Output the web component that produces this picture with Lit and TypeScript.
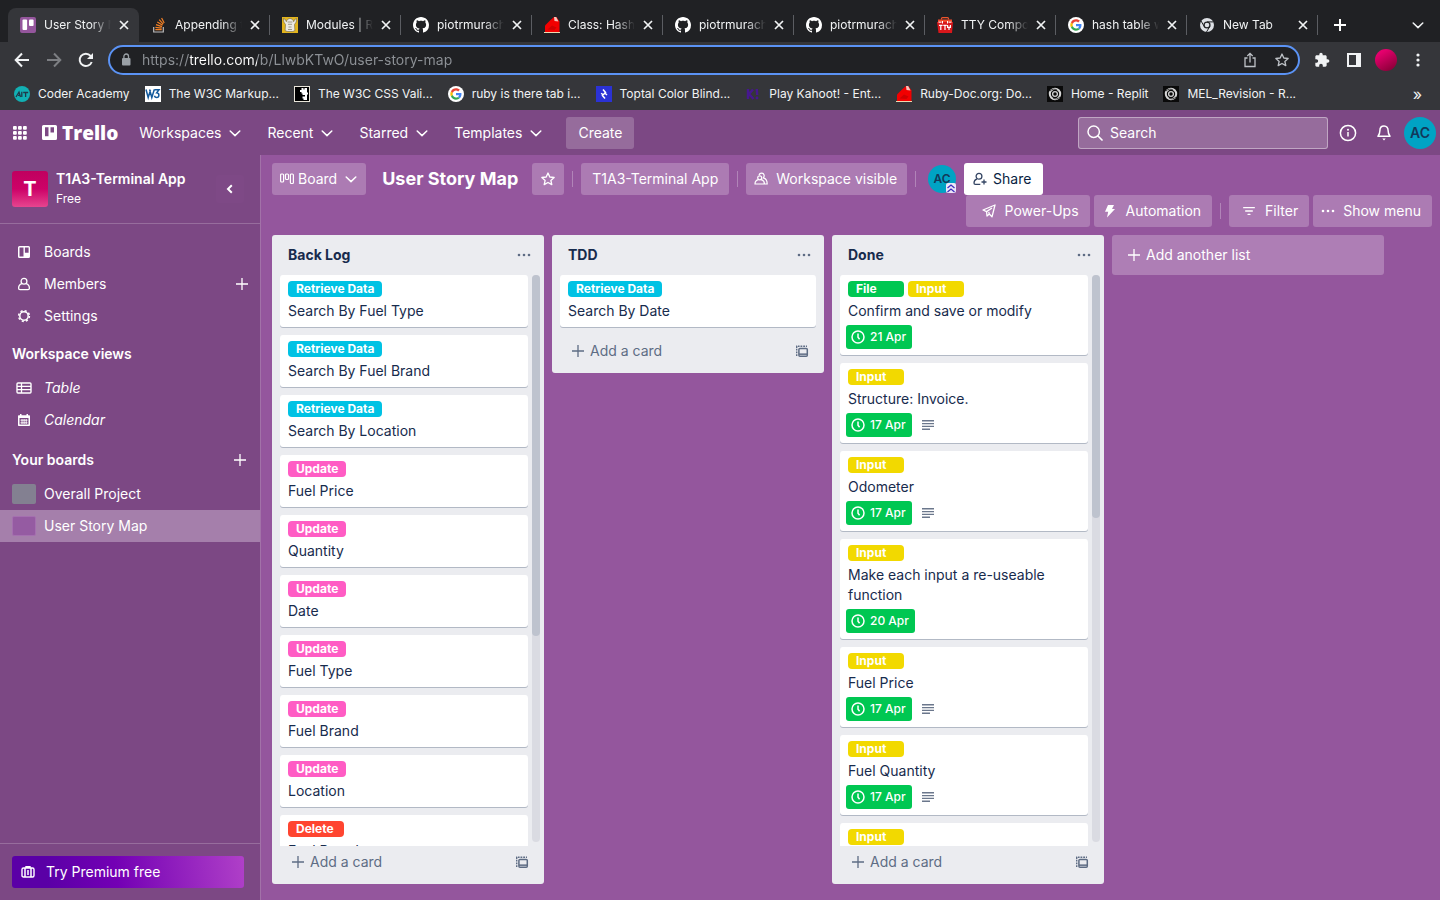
import { LitElement, html, svg, css, nothing } from "lit";
import { customElement, property } from "lit/decorators.js";
import { classMap } from "lit/directives/class-map.js";
import { styleMap } from "lit/directives/style-map.js";

const icon = (size: number, box: string, body: unknown, h = size) => html`<svg
  width=${size} height=${h} viewBox=${box} fill="none" aria-hidden="true">${body}</svg>`;

const GITHUB =
  "M8 0C3.58 0 0 3.58 0 8c0 3.54 2.29 6.53 5.47 7.59.4.07.55-.17.55-.38 0-.19-.01-.82-.01-1.49-2.01.37-2.53-.49-2.69-.94-.09-.23-.48-.94-.82-1.13-.28-.15-.68-.52-.01-.53.63-.01 1.08.58 1.23.82.72 1.21 1.87.87 2.33.66.07-.52.28-.87.51-1.07-1.78-.2-3.64-.89-3.64-3.95 0-.87.31-1.59.82-2.15-.08-.2-.36-1.02.08-2.12 0 0 .67-.21 2.2.82.64-.18 1.32-.27 2-.27.68 0 1.36.09 2 .27 1.53-1.04 2.2-.82 2.2-.82.44 1.1.16 1.92.08 2.12.51.56.82 1.27.82 2.15 0 3.07-1.87 3.75-3.65 3.95.29.25.54.73.54 1.48 0 1.07-.01 1.93-.01 2.2 0 .21.15.46.55.38A8.013 8.013 0 0016 8c0-4.42-3.58-8-8-8z";

const favicons: Record<string, () => unknown> = {
  trello: () => icon(16, "0 0 16 16", svg`<rect width="16" height="16" rx="2" fill="#94569c"/>
    <rect x="2.5" y="2.5" width="4.6" height="10.5" rx="1" fill="#fff"/><rect x="9" y="2.5" width="4.6" height="6.5" rx="1" fill="#fff"/>`),
  stack: () => icon(16, "0 0 16 16", svg`<path d="M2.7 10v5h9.6v-5" stroke="#bcbbbb" stroke-width="1.2"/>
    <path d="M4.3 12.7h6.4M4.4 10.3l6.3.9M5 7.6l6 2M6.3 4.9l5.3 3.4M8.2 2.6l4 4.6M10.6.9l2.6 5.2" stroke="#f48024" stroke-width="1.2"/>`),
  modules: () => icon(16, "0 0 16 16", svg`<rect width="16" height="16" fill="#e3b51e"/>
    <path d="M1.5 1.5l2 1.200.8 2C5 2.500 6.500 1.500 8 1.500s3 1 3.700 3.200l.8-2 2-1.200-.3 3.500-1.700 2.500.4 6-2 1H5.100l-2-1 .4-6-1.700-2.500z" fill="#ece9e2" stroke="#6f6548" stroke-width=".6"/>
    <path d="M5.600 5h4.800M6 7.300h4M6.500 10h3M6 12.500h4" stroke="#8b8473" stroke-width=".8"/>`),
  github: () => icon(16, "0 0 16 16", svg`<path fill="#fff" d=${GITHUB}/>`),
  ruby: () => icon(16, "0 0 16 16", svg`<path d="M1 15V8.500L6.500 3 10 0h2.500L15.500 4.500V15z" fill="#f20000"/>
    <path d="M3.500 12.500l4.500-4 4.500 2-2 2.500z" fill="#d00000"/><path d="M10 0h2.200L14.500 4.500l-4-.6z" fill="#f4c4bd"/><path d="M0 15h16v1H0z" fill="#efd9b0"/>`),
  tty: () => icon(16, "0 0 16 16", svg`<path d="M4.500 2.500V1.600C4.500.900 5 .6 5.500.6h5c.6 0 1 .4 1 1v.900" stroke="#f0552c" stroke-width="1.2"/>
    <path d="M1 2.500h14v3.200H1z" fill="#f04a2a"/><path d="M0 5h16l-1 11H1.500z" fill="#d8171b"/>
    <path d="M1.500 5.200h3m7 0h3M5.500 4v2.500M10.500 4v2.500" stroke="#fff" stroke-width="1"/>
    <path d="M2 8.300h3.600M3.800 8.300V13M6.300 8.300h3.500M8 8.300V13M10.600 8v2.300h2.800V8M12 10.300V13" stroke="#fff" stroke-width="1.200"/>`),
  google: () => icon(16, "0 0 16 16", svg`<circle cx="8" cy="8" r="8" fill="#fff"/>
    <g transform="translate(2.300 2.300) scale(.2375)">
    <path fill="#ea4335" d="M24 9.500c3.540 0 6.710 1.220 9.210 3.600l6.850-6.850C35.900 2.380 30.470 0 24 0 14.620 0 6.510 5.380 2.560 13.220l7.980 6.190C12.430 13.720 17.740 9.500 24 9.500z"/>
    <path fill="#4285f4" d="M46.980 24.550c0-1.570-.15-3.090-.38-4.550H24v9.020h12.940c-.58 2.960-2.260 5.480-4.780 7.180l7.730 6c4.510-4.180 7.090-10.360 7.090-17.650z"/>
    <path fill="#fbbc05" d="M10.530 28.590c-.48-1.450-.76-2.990-.76-4.590s.27-3.140.76-4.590l-7.980-6.190C.92 16.460 0 20.120 0 24c0 3.880.92 7.540 2.560 10.780l7.970-6.190z"/>
    <path fill="#34a853" d="M24 48c6.480 0 11.930-2.130 15.890-5.810l-7.730-6c-2.150 1.450-4.920 2.300-8.160 2.300-6.260 0-11.570-4.220-13.470-9.910l-7.980 6.190C6.510 42.620 14.620 48 24 48z"/></g>`),
  chrome: () => icon(16, "0 0 16 16", svg`<circle cx="8" cy="8" r="7" fill="#dee1e6"/>
    <circle cx="8" cy="8" r="3.600" fill="#202124"/><circle cx="8" cy="8" r="2.300" fill="#dee1e6"/>
    <path d="M8 4.900h6.600M5.300 9.600L2 3.900M10.700 9.600L7.500 15" stroke="#202124" stroke-width="1"/>`),
  coder: () => icon(16, "0 0 16 16", svg`<circle cx="8" cy="8" r="8" fill="#12b0b3"/>
    <path d="M2 11l3-5 1.500 5M4 9.300h2M7.800 5.800V11M9.200 6.500h5M11.600 6.500V11" stroke="#1f3a4a" stroke-width="1.300"/>`),
  w3: () => icon(16, "0 0 16 16", svg`<rect width="16" height="16" fill="#fff"/>
    <path d="M1 3.500l2.200 8L5.500 4M4.600 3.500l2.200 8 2.500-8M9.500 3.800H14l-2.300 3c3 .2 2.800 4.700 0 4.700-1.200 0-2-.7-2.300-1.700" stroke="#12599c" stroke-width="1.500"/>`),
  w3css: () => icon(16, "0 0 16 16", svg`<rect x=".5" y=".5" width="15" height="15" fill="#000" stroke="#e9e5da"/>
    <path d="M7.500 2h2v1.500h1V2h2.500v4.500h1v2h-1V14H9.500v-1.500H8.500v-2H11V9H8.500V7.500h-1V6H6V4h1.500z" fill="#fff"/>`),
  toptal: () => icon(16, "0 0 16 16", svg`<rect width="16" height="16" fill="#2b32d5"/>
    <path d="M7 3.500l2.500 3-3 3 2.500 3M5.200 7.200l1.800 1.600M11 9L9 7.200" stroke="#fff" stroke-width="1.500"/>`),
  kahoot: () => icon(16, "0 0 16 16", svg`<path d="M3 3v10M8 3.500L4 8l4.500 5M11.800 3l.4 6" stroke="#46178f" stroke-width="2.400"/><circle cx="12" cy="12" r="1.400" fill="#46178f"/>`),
  replit: () => icon(16, "0 0 16 16", svg`<rect width="16" height="16" fill="#0a0a0a"/>
    <circle cx="8" cy="8" r="5.200" stroke="#d6d6d6" stroke-width="2"/><circle cx="8" cy="8" r="2.400" stroke="#cfcfcf" stroke-width="1.300"/>
    <path d="M3 5c2-2 4.500-2.500 7-1M13 11c-2 2-4.500 2.500-7 1" stroke="#0a0a0a" stroke-width=".7"/>`),
};

const plus = (s = 12) => icon(s, "0 0 12 12", svg`<path d="M6 0v12M0 6h12" stroke="currentColor" stroke-width="1.300"/>`);
const cross = () => icon(10, "0 0 10 10", svg`<path d="M1 1l8 8M9 1l-8 8" stroke="#f1f3f4" stroke-width="1.700"/>`);
const chevron = () => icon(12, "0 0 12 12", svg`<path d="M1.200 4L6 8.600 10.800 4" stroke="currentColor" stroke-width="1.500" stroke-linecap="round" stroke-linejoin="round"/>`);
const dots = () => icon(14, "0 0 14 4", svg`<g fill="currentColor"><circle cx="2" cy="2" r="1.300"/><circle cx="7" cy="2" r="1.300"/><circle cx="12" cy="2" r="1.300"/></g>`, 4);
const boardsIcon = () => icon(14, "0 0 14 14", svg`<path fill="currentColor" fill-rule="evenodd" d="M2.500 1h9A1.500 1.500 0 0113 2.500v9a1.500 1.500 0 01-1.500 1.500h-9A1.500 1.500 0 011 11.500v-9A1.500 1.500 0 012.500 1zm0 1.400v9.200h4V2.400zm5.400 0v5.400h3.700V2.400z"/>`);
const personIcon = () => icon(14, "0 0 14 14", svg`<g stroke="currentColor" stroke-width="1.300"><circle cx="7" cy="4.200" r="2.900"/><path d="M4.800 6.700C2.800 7.400 1.600 9 1.600 11.200c0 .900.500 1.400 1.400 1.400h8c.900 0 1.400-.5 1.400-1.400 0-2.200-1.200-3.800-3.200-4.500"/></g>`);
const gearIcon = () => icon(14, "0 0 14 14", svg`<circle cx="7" cy="7" r="4.200" stroke="currentColor" stroke-width="1.500"/><circle cx="7" cy="7" r="5.400" stroke="currentColor" stroke-width="1.500" stroke-dasharray="2.120 2.120"/>`);
const tableIcon = () => icon(16, "0 0 16 12", svg`<rect x="1" y="1" width="14" height="10" rx="1" stroke="currentColor" stroke-width="1.400"/><path d="M1 4.300h14M1 7.600h14M5.500 1v10" stroke="currentColor" stroke-width="1.300"/>`, 12);
const calendarIcon = () => icon(14, "0 0 14 14", svg`<path fill="currentColor" fill-rule="evenodd" d="M3 1h1.500v1.200h5V1H11v1.200h1c.600 0 1 .4 1 1V12c0 .6-.4 1-1 1H2c-.6 0-1-.4-1-1V3.200c0-.6.4-1 1-1h1zM2.500 5v6.500h9V5z"/><path d="M3.500 7.200h7M3.500 9.800h7M5 6v5M7.100 6v5M9.200 6v5" stroke="currentColor" stroke-width=".9"/>`);
const clockIcon = () => icon(14, "0 0 14 14", svg`<circle cx="7" cy="7" r="6" stroke="currentColor" stroke-width="1.500"/><path d="M7 3.400v3.800l1.600 2" stroke="currentColor" stroke-width="1.500"/>`);
const linesIcon = () => icon(12, "0 0 12 10", svg`<path d="M0 .8h12M0 3.600h12M0 6.400h12M0 9.200h8" stroke="#6b778c" stroke-width="1.400"/>`, 10);
const templateIcon = () => icon(14, "0 0 14 14", svg`<path d="M1.700 12V2.300H12" stroke="currentColor" stroke-width="1.400" stroke-dasharray="1.800 .9"/><rect x="3.900" y="4.600" width="8.400" height="7.600" rx="1" stroke="currentColor" stroke-width="1.500"/><path d="M4 9.400h8.300v1.500H4z" fill="currentColor"/>`);
const starIcon = (s: number) => icon(s, "0 0 24 24", svg`<path d="M12 3l2.700 6 6.500.7-4.900 4.400 1.400 6.400L12 17.200l-5.700 3.300 1.400-6.400L2.800 9.700l6.500-.7z" stroke="currentColor" stroke-width="2" stroke-linejoin="round"/>`);

interface Tab { fav: string; title: string }
const TABS: Tab[] = [
  { fav: "trello", title: "User Story Map" },
  { fav: "stack", title: "Appending to hash" },
  { fav: "modules", title: "Modules | Ruby" },
  { fav: "github", title: "piotrmurach/tty" },
  { fav: "ruby", title: "Class: Hash (Ruby)" },
  { fav: "github", title: "piotrmurach/tty" },
  { fav: "github", title: "piotrmurach/tty" },
  { fav: "tty", title: "TTY Components" },
  { fav: "google", title: "hash table with" },
  { fav: "chrome", title: "New Tab" },
];

const BOOKMARKS: [string, string][] = [
  ["coder", "Coder Academy"],
  ["w3", "The W3C Markup..."],
  ["w3css", "The W3C CSS Vali..."],
  ["google", "ruby is there tab i..."],
  ["toptal", "Toptal Color Blind..."],
  ["kahoot", "Play Kahoot! - Ent..."],
  ["ruby", "Ruby-Doc.org: Do..."],
  ["replit", "Home - Replit"],
  ["replit", "MEL_Revision - R..."],
];

interface Card { labels: string[]; title: string; due?: string; notes?: boolean }
interface List { name: string; cards: Card[]; thumb?: number }

const LABEL_KIND: Record<string, string> = {
  "Retrieve Data": "sky", Update: "pink", Delete: "red", File: "green", Input: "yellow",
};

const card = (label: string, title: string, due?: string, notes = false): Card => ({ labels: [label], title, due, notes });

const LISTS: List[] = [
  {
    name: "Back Log",
    thumb: 63.6,
    cards: [
      card("Retrieve Data", "Search By Fuel Type"),
      card("Retrieve Data", "Search By Fuel Brand"),
      card("Retrieve Data", "Search By Location"),
      card("Update", "Fuel Price"),
      card("Update", "Quantity"),
      card("Update", "Date"),
      card("Update", "Fuel Type"),
      card("Update", "Fuel Brand"),
      card("Update", "Location"),
      card("Delete", "Fuel Brand"),
    ],
  },
  { name: "TDD", cards: [card("Retrieve Data", "Search By Date")] },
  {
    name: "Done",
    thumb: 42.8,
    cards: [
      { labels: ["File", "Input"], title: "Confirm and save or modify", due: "21 Apr" },
      card("Input", "Structure: Invoice.", "17 Apr", true),
      card("Input", "Odometer", "17 Apr", true),
      card("Input", "Make each input a re-useable function", "20 Apr"),
      card("Input", "Fuel Price", "17 Apr", true),
      card("Input", "Fuel Quantity", "17 Apr", true),
      card("Input", "Date", "17 Apr", true),
    ],
  },
];

const base = css`
  * { box-sizing: border-box; }
  button, input { font: inherit; color: inherit; border: 0; background: none; padding: 0; margin: 0; }
  a { color: inherit; text-decoration: none; }
  h1, h2, h3, p, ul { margin: 0; padding: 0; font-size: inherit; }
  ul { list-style: none; }
  svg { display: block; flex: none; }
  button { display: flex; align-items: center; flex: none; }
`;

@customElement("browser-bar")
export class BrowserBar extends LitElement {
  static styles = [base, css`
    :host { display: block; background: #35363a; color: #f1f3f4; font-size: 12px; line-height: 16px; }
    .tabs { display: flex; background: #202124; height: 42px; padding: 8px 16px 0 8px; align-items: stretch; }
    .tab { flex: 0 1 131px; min-width: 0; display: flex; align-items: center; padding: 0 10px 0 12px; position: relative; }
    .tab.active { background: #35363a; border-radius: 8px 8px 0 0; }
    .tab:not(.active)::after { content: ""; position: absolute; right: 0; top: 7px; width: 1px; height: 20px; background: #5b5d62; }
    .tab-title { flex: 1; min-width: 0; margin: 0 8px 0 8px; overflow: hidden; white-space: nowrap;
      mask-image: linear-gradient(90deg, #000 calc(100% - 20px), transparent); }
    .new { margin-left: 16px; }
    .search-tabs { margin-left: auto; }
    .toolbar { display: flex; align-items: center; height: 36px; padding: 0 10px; gap: 8px; }
    .tool { width: 24px; height: 24px; justify-content: center; }
    .omni { flex: 1; display: flex; align-items: center; height: 30px; margin: 0 2px; padding: 0 4px 0 10px; gap: 8px;
      border: 2px solid #5b93f5; border-radius: 15px; background: #202124; color: #bdc1c6; }
    .url-row { flex: 1; display: flex; align-items: center; gap: 10px; }
    .url { flex: 1; min-width: 0; font-size: 14px; line-height: 20px; color: #9aa0a6; outline: 0;
      -webkit-text-fill-color: transparent; background: linear-gradient(90deg, #8d9196 48px, #fff 48px, #fff 115px, #8d9196 115px);
      -webkit-background-clip: text; background-clip: text; }
    .face { width: 22px; height: 22px; border-radius: 50%; background: linear-gradient(150deg, #e5006d 20%, #7d0030); }
    .marks { display: flex; align-items: center; height: 32px; padding: 0 18px 0 14px; gap: 15px; white-space: nowrap; }
    .mark { display: flex; align-items: center; gap: 8px; }
    .more { margin-left: auto; font-size: 16px; }
  `];

  render() {
    return html`
      <div class="tabs" role="tablist">
        ${TABS.map((t, i) => html`<div class=${classMap({ tab: true, active: i === 0 })} role="tab">
          ${favicons[t.fav]()}<span class="tab-title">${t.title}</span><button aria-label="Close tab">${cross()}</button>
        </div>`)}
        <button class="new" aria-label="New tab">${icon(12, "0 0 12 12", svg`<path d="M6 0v12M0 6h12" stroke="#fff" stroke-width="2"/>`)}</button>
        <button class="search-tabs" aria-label="Search tabs">${chevron()}</button>
      </div>
      <div class="toolbar">
        <button class="tool" aria-label="Back">${icon(16, "0 0 16 16", svg`<path d="M15 8H2M8 1.500L1.700 8 8 14.500" stroke="#f1f3f4" stroke-width="2"/>`)}</button>
        <button class="tool" aria-label="Forward">${icon(16, "0 0 16 16", svg`<path d="M1 8h13M8 1.500L14.300 8 8 14.500" stroke="#7d7f83" stroke-width="2"/>`)}</button>
        <button class="tool" aria-label="Reload">${icon(16, "0 0 16 16", svg`<path d="M13.700 10A6.200 6.200 0 1112.600 3.800L14 5.300" stroke="#f1f3f4" stroke-width="2"/><path d="M15 1v6H9z" fill="#f1f3f4"/>`)}</button>
        <div class="omni">
          <div class="url-row">
            ${icon(12, "0 0 12 14", svg`<rect x="2" y="5" width="8.500" height="7.500" rx="1" fill="#9aa0a6"/><path d="M3.900 5.500V3.300a2.300 2.300 0 014.600 0v2.200" stroke="#9aa0a6" stroke-width="1.300"/>`, 14)}
            <input class="url" aria-label="Address" value="https://trello.com/b/LlwbKTwO/user-story-map" />
          </div>
          <button class="tool" aria-label="Share page">${icon(12, "0 0 12 16", svg`<path d="M3.500 6H1v8.500h10V6H8.500M6 10.500V1.500M3.300 4L6 1.400 8.700 4" stroke="currentColor" stroke-width="1.300"/>`, 16)}</button>
          <button class="tool" aria-label="Bookmark">${starIcon(16)}</button>
        </div>
        <button class="tool" aria-label="Extensions">${icon(16, "0 0 24 24", svg`<path fill="#f1f3f4" d="M20.500 11H19V7c0-1.100-.9-2-2-2h-4V3.500C13 2.120 11.880 1 10.500 1S8 2.120 8 3.500V5H4c-1.100 0-1.990.9-1.990 2v3.800H3.500c1.490 0 2.700 1.210 2.700 2.700s-1.210 2.700-2.700 2.700H2V20c0 1.100.9 2 2 2h3.800v-1.500c0-1.490 1.210-2.700 2.700-2.700 1.490 0 2.700 1.210 2.700 2.700V22H17c1.100 0 2-.9 2-2v-4h1.500c1.380 0 2.500-1.120 2.500-2.500S21.880 11 20.500 11z"/>`)}</button>
        <button class="tool" aria-label="Side panel">${icon(14, "0 0 14 14", svg`<rect x="1" y="1" width="12" height="12" stroke="#f1f3f4" stroke-width="2"/><path d="M9 1h4v12H9z" fill="#f1f3f4"/>`)}</button>
        <button class="tool" aria-label="Profile"><span class="face"></span></button>
        <button class="tool" aria-label="Browser menu">${icon(14, "0 0 14 14", svg`<g fill="#f1f3f4"><circle cx="7" cy="2" r="1.600"/><circle cx="7" cy="7" r="1.600"/><circle cx="7" cy="12" r="1.600"/></g>`)}</button>
      </div>
      <nav class="marks" aria-label="Bookmarks">
        ${BOOKMARKS.map(([fav, name]) => html`<a href="#" class="mark">${favicons[fav]()}<span>${name}</span></a>`)}
        <button class="more" aria-label="More bookmarks">»</button>
      </nav>`;
  }
}

@customElement("trello-header")
export class TrelloHeader extends LitElement {
  static styles = [base, css`
    :host { display: flex; align-items: center; height: 45px; padding: 0 4px 0 13px; background: #7c4884; color: #fff; }
    .logo { display: flex; align-items: center; gap: 5px; margin: 0 9px 0 15px; font: 800 19px/24px "Open Sans", sans-serif; }
    .menu { gap: 8px; height: 32px; padding: 0 12px 0 12px; margin-right: 2px; }
    .create { height: 32px; padding: 0 12px; margin-left: 10px; border-radius: 3px; background: rgba(255,255,255,.2); }
    .search { display: flex; align-items: center; gap: 7px; width: 250px; height: 32px; padding: 0 8px; margin-left: auto;
      border: 1px solid rgba(255,255,255,.4); border-radius: 3px; background: rgba(255,255,255,.2); }
    .field { flex: 1; min-width: 0; outline: 0; }
    .field::placeholder { color: #fff; opacity: 1; }
    .tools { display: flex; align-items: center; gap: 18px; margin: 0 11px; }
    .me { width: 32px; height: 32px; border-radius: 50%; justify-content: center; background: #00a3c4; color: #12395a; font-weight: 600; }
  `];

  render() {
    return html`
      <button aria-label="Apps">${icon(14, "0 0 14 14", svg`<g fill="#fff">${[0, 5, 10].map((y) => [0, 5, 10].map((x) => svg`<rect x=${x} y=${y} width="3.800" height="3.800" rx="1"/>`))}</g>`)}</button>
      <a class="logo" href="#">${icon(15, "0 0 15 15", svg`<path fill="#fff" fill-rule="evenodd" d="M1.500 0h12A1.500 1.500 0 0115 1.500v12a1.500 1.500 0 01-1.500 1.500h-12A1.500 1.500 0 010 13.500v-12A1.500 1.500 0 011.500 0zM3 2.300v9h3.500v-9zm5.500 0v5.200H12V2.300z"/>`)}Trello</a>
      ${["Workspaces", "Recent", "Starred", "Templates"].map((m) => html`<button class="menu">${m}${chevron()}</button>`)}
      <button class="create">Create</button>
      <label class="search">${icon(16, "0 0 16 16", svg`<circle cx="6.700" cy="6.700" r="5.700" stroke="#fff" stroke-width="1.500"/><path d="M11 11l4 4" stroke="#fff" stroke-width="1.700" stroke-linecap="round"/>`)}
        <input class="field" type="search" aria-label="Search" placeholder="Search" /></label>
      <div class="tools">
        <button aria-label="Information">${icon(18, "0 0 18 18", svg`<circle cx="9" cy="9" r="7.600" stroke="#fff" stroke-width="1.500"/><path d="M9 8v4.500" stroke="#fff" stroke-width="1.500"/><circle cx="9" cy="5.700" r="1" fill="#fff"/>`)}</button>
        <button aria-label="Notifications">${icon(18, "0 0 18 18", svg`<path d="M9 2C6.300 2 4.900 4 4.900 6.600c0 3-.900 4.400-1.900 5.700h12c-1-1.300-1.900-2.700-1.900-5.700C13.100 4 11.700 2 9 2z" stroke="#fff" stroke-width="1.500" stroke-linejoin="round"/><path d="M7.300 14.500h3.400L9 16.500z" fill="#fff"/>`)}</button>
      </div>
      <button class="me">AC</button>`;
  }
}

@customElement("workspace-sidebar")
export class WorkspaceSidebar extends LitElement {
  static styles = [base, css`
    :host { display: flex; flex-direction: column; flex: 0 0 260px; background: #7c4884; color: #fff; border-right: 1px solid #a272a8; }
    .head { display: flex; align-items: center; gap: 8px; height: 69px; padding: 0 16px 0 12px; border-bottom: 1px solid #976d9d; }
    .badge { width: 36px; height: 36px; border-radius: 3px; display: grid; place-items: center; font-weight: 700; font-size: 20px;
      background: linear-gradient(#c0005f, #cd0268 50%, #e6458f); }
    .who { flex: 1; }
    .name { font-weight: 600; }
    .plan { font-size: 12px; line-height: 20px; }
    .fold { width: 28px; height: 28px; justify-content: center; border-radius: 3px; background: rgba(140,80,150,.15); }
    .nav { flex: 1; padding-top: 12px; }
    .row { display: flex; align-items: center; height: 32px; padding: 0 12px; gap: 8px; }
    .row.here { background: #a57fab; }
    .pic { width: 24px; display: grid; place-items: center; }
    .label { flex: 1; }
    .italic { font-style: italic; }
    .title { display: flex; align-items: center; justify-content: space-between; height: 40px; padding: 4px 14px 0 12px; font-weight: 600; }
    .title.boards { height: 42px; padding-top: 6px; }
    .swatch { width: 24px; height: 20px; border-radius: 2px; background: #838091; }
    .swatch.purple { background: #955ba2; border: 1px solid #a56fb0; }
    .foot { padding: 12px 16px 12px 12px; border-top: 1px solid #976d9d; }
    .premium { width: 100%; height: 32px; padding: 0 9px; gap: 11px; border-radius: 3px;
      background: linear-gradient(82deg, #5a00a6 15%, #7300b4 45%, #b040c8); }
  `];

  render() {
    const add = (name: string) => html`<button aria-label=${name}>${plus()}</button>`;
    return html`
      <div class="head">
        <div class="badge">T</div>
        <div class="who"><h2 class="name">T1A3-Terminal App</h2><p class="plan">Free</p></div>
        <button class="fold" aria-label="Collapse sidebar">${icon(10, "0 0 10 10", svg`<path d="M6.800 1.300L3 5l3.800 3.700" stroke="#fff" stroke-width="2"/>`)}</button>
      </div>
      <nav class="nav">
        <a class="row" href="#"><span class="pic">${boardsIcon()}</span><span class="label">Boards</span></a>
        <div class="row"><span class="pic">${personIcon()}</span><a class="label" href="#">Members</a>${add("Add member")}</div>
        <a class="row" href="#"><span class="pic">${gearIcon()}</span><span class="label">Settings</span></a>
        <h3 class="title">Workspace views</h3>
        <a class="row" href="#"><span class="pic">${tableIcon()}</span><span class="label italic">Table</span></a>
        <a class="row" href="#"><span class="pic">${calendarIcon()}</span><span class="label italic">Calendar</span></a>
        <h3 class="title boards">Your boards${add("Add board")}</h3>
        <a class="row" href="#"><span class="swatch"></span>Overall Project</a>
        <a class="row here" href="#"><span class="swatch purple"></span>User Story Map</a>
      </nav>
      <div class="foot"><button class="premium">${icon(14, "0 0 14 14", svg`<path d="M5 3V1.700h4V3M1 4.500C1 3.600 1.600 3 2.500 3h9c.900 0 1.500.600 1.500 1.500v6c0 .9-.6 1.500-1.500 1.500h-9C1.600 12 1 11.400 1 10.500z" stroke="#fff" stroke-width="1.400"/><path d="M4 3v9M10 3v9M7 5v5" stroke="#fff" stroke-width="1.500"/>`)}Try Premium free</button></div>`;
  }
}

@customElement("board-list")
export class BoardList extends LitElement {
  @property({ attribute: false }) list!: List;

  static styles = [base, css`
    :host { display: flex; flex-direction: column; flex: 0 0 272px; max-height: 100%; min-height: 0; border-radius: 3px;
      background: #ebecf0; color: #172b4d; }
    .head { display: flex; align-items: center; justify-content: space-between; height: 40px; flex: none; padding: 0 13px 0 16px; font-weight: 600; }
    .head button, .foot { color: #5e6c84; }
    .body { display: flex; min-height: 0; gap: 4px; padding: 0 4px 0 8px; }
    .cards { flex: 1; overflow: auto; scrollbar-width: none; }
    .body.short { padding-right: 8px; }
    .card { background: #fff; border-radius: 3px; box-shadow: 0 1px 0 #b2b9c5; padding: 6px 8px; margin-bottom: 8px; }
    .labels { display: flex; gap: 4px; margin-bottom: 4px; }
    .tag { min-width: 56px; height: 16px; padding: 0 8px; border-radius: 4px; color: #fff; font-size: 12px; line-height: 16px; font-weight: 700; }
    .sky { background: #00c2e4; }
    .pink { background: #ff5cc4; }
    .red { background: #ff4530; }
    .green { background: #00c752; }
    .yellow { background: #f2d900; }
    .badges { display: flex; align-items: center; gap: 10px; margin: 4px 0 0 -2px; }
    .due { display: flex; align-items: center; gap: 5px; height: 24px; padding: 0 6px 0 5px; border-radius: 3px;
      background: #00c752; color: #fff; font-size: 12px; font-weight: 500; }
    .track { width: 8px; border-radius: 4px; margin-bottom: 4px; background: #dadbe2; }
    .thumb { width: 8px; border-radius: 4px; background: #bec3ce; }
    .foot { display: flex; align-items: center; justify-content: space-between; height: 38px; flex: none; padding: 0 15px 6px 20px; }
    .add { gap: 6px; }
  `];

  render() {
    const { name, cards, thumb } = this.list;
    return html`
      <div class="head"><h2>${name}</h2><button aria-label="List actions">${dots()}</button></div>
      <div class=${classMap({ body: true, short: !thumb })}>
        <div class="cards">${cards.map((c) => html`<article class="card">
          <div class="labels">${c.labels.map((l) => html`<span class="tag ${LABEL_KIND[l]}">${l}</span>`)}</div>
          <p>${c.title}</p>
          ${c.due ? html`<div class="badges"><span class="due">${clockIcon()}${c.due}</span>${c.notes ? linesIcon() : nothing}</div>` : nothing}
        </article>`)}</div>
        ${thumb ? html`<div class="track"><div class="thumb" style=${styleMap({ height: `${thumb}%` })}></div></div>` : nothing}
      </div>
      <div class="foot"><button class="add">${plus()}Add a card</button><button aria-label="Create from template">${templateIcon()}</button></div>`;
  }
}

@customElement("board-view")
export class BoardView extends LitElement {
  static styles = [base, css`
    :host { display: flex; flex-direction: column; flex: 1; min-width: 0; background: #94569d; color: #fff; }
    .bar { display: flex; flex-wrap: wrap; padding: 8px 8px 8px 11px; }
    .group { display: flex; align-items: center; }
    .group.right { margin-left: auto; gap: 4px; }
    .btn { height: 32px; padding: 0 11px; border-radius: 3px; background: #ac7bb3; }
    .btn.view { padding: 0 9px 0 8px; gap: 4px; }
    .view svg:last-child { margin-left: 4px; }
    .title { font-size: 18px; line-height: 24px; font-weight: 700; margin: 0 14px 0 16px; }
    .btn.square { width: 32px; padding: 0; justify-content: center; }
    .rule { width: 1px; height: 16px; margin: 0 8px; background: #b184b8; }
    .group.right .rule { margin: 0 4px; }
    .btn.visible { padding: 0 10px 0 8px; gap: 8px; }
    .member { position: relative; width: 28px; height: 28px; margin: 0 8px 0 4px; border-radius: 50%; justify-content: center;
      background: #00a3c4; color: #12395a; font-weight: 600; font-size: 12px; }
    .rank { position: absolute; right: 0; bottom: 0; }
    .btn.share { background: #fff; color: #091e42; gap: 6px; padding: 0 12px 0 9px; }
    .lists { flex: 1; min-height: 0; display: flex; align-items: flex-start; gap: 8px; padding: 0 11px 16px; overflow: hidden; }
    .another { flex: 0 0 272px; height: 40px; padding: 0 16px; gap: 6px; border-radius: 3px; background: #ae7eb5; }
    .btn.wide { padding-left: 15px; gap: 8px; }
    .btn.filter { padding-left: 12px; gap: 8px; }
    .btn.tight { padding-left: 8px; gap: 8px; }
  `];

  render() {
    return html`
      <div class="bar">
        <div class="group">
          <button class="btn view">${icon(14, "0 0 14 12", svg`<g stroke="#fff" stroke-width="1.200"><rect x=".6" y="1" width="3" height="8" rx="1"/><rect x="5.500" y="1" width="3" height="5.500" rx="1"/><rect x="10.400" y="1" width="3" height="9.500" rx="1"/></g>`, 12)}Board${chevron()}</button>
          <h1 class="title">User Story Map</h1>
          <button class="btn square" aria-label="Star board">${starIcon(16)}</button>
          <span class="rule"></span>
          <button class="btn">T1A3-Terminal App</button>
          <span class="rule"></span>
          <button class="btn visible">${icon(14, "0 0 14 14", svg`<g stroke="#fff" stroke-width="1.200"><circle cx="5.700" cy="5.800" r="2"/><path d="M4.500 7.600C2.500 8 1 9.600 1 12h9.400c0-2.400-1.500-4-3.500-4.400M5 3.200C5.300 2 6.300 1.200 7.600 1.200c2.300 0 3.400 2.500 1.800 4.600 2.300.6 3.800 2.500 3.800 6.200h-2.500"/></g>`)}Workspace visible</button>
          <span class="rule"></span>
          <button class="member">AC<span class="rank">${icon(10, "0 0 10 10", svg`<rect width="10" height="10" rx="2" fill="#ece6f8"/><path d="M1.500 5L5 2l3.500 3M1.500 9L5 6l3.500 3" stroke="#3c2fc0" stroke-width="1.300"/>`)}</span></button>
          <button class="btn share">${icon(14, "0 0 14 14", svg`<g stroke="#344563" stroke-width="1.300"><circle cx="6" cy="4.300" r="2.900"/><path d="M4 6.800C2.200 7.500 1 9 1 11c0 .900.500 1.400 1.300 1.400h5M11 7.500v5M8.500 10h5"/></g>`)}Share</button>
        </div>
        <div class="group right">
          <button class="btn wide">${icon(16, "0 0 16 16", svg`<path d="M14 2L2 7l3.600 1.600L6 13l2.300-2 2.700 2.800zM5.600 8.600L11 5M8.300 11l-.6-2" stroke="#fff" stroke-width="1.300" stroke-linejoin="round"/>`)}Power-Ups</button>
          <button class="btn tight">${icon(16, "0 0 16 16", svg`<path d="M6 2h6l-2 4h3L5 14.500l1.200-5.700H3z" fill="#fff"/>`)}Automation</button>
          <span class="rule"></span>
          <button class="btn filter">${icon(16, "0 0 24 24", svg`<path d="M4 7h16M7 12h10M10.500 17h3" stroke="#fff" stroke-width="2" stroke-linecap="round"/>`)}Filter</button>
          <button class="btn tight">${dots()}Show menu</button>
        </div>
      </div>
      <div class="lists">
        ${LISTS.map((list) => html`<board-list .list=${list}></board-list>`)}
        <button class="another">${plus()}Add another list</button>
      </div>`;
  }
}

@customElement("app-root")
export class AppRoot extends LitElement {
  static styles = css`
    :host { display: flex; flex-direction: column; height: 100vh; overflow: hidden; font: 400 14px/20px Inter, "Liberation Sans", sans-serif; }
    .main { flex: 1; min-height: 0; display: flex; }
  `;

  render() {
    return html`<browser-bar></browser-bar><trello-header></trello-header>
      <div class="main"><workspace-sidebar></workspace-sidebar><board-view></board-view></div>`;
  }
}
